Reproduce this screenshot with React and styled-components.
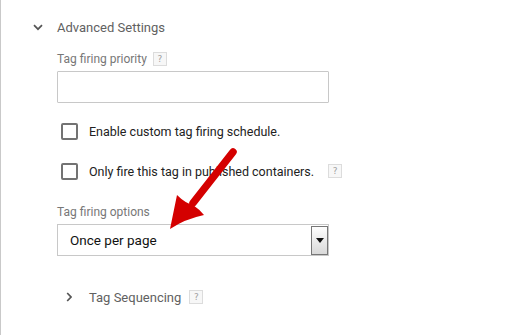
import React from 'react';
import styled, { createGlobalStyle } from 'styled-components';

const GlobalStyle = createGlobalStyle`
  html, body {
    margin: 0;
    padding: 0;
    background: #fff;
  }
  body {
    font-family: Roboto, 'Liberation Sans', Arial, sans-serif;
  }
`;

const Panel = styled.div`
  position: relative;
  width: 522px;
  height: 335px;
  border-left: 1px solid #c9c9c9;
  box-sizing: border-box;
  overflow: hidden;
`;

const SectionHeader = styled.div`
  display: flex;
  align-items: center;
  height: 20px;
  margin-top: ${(p) => p.top || 0}px;
  padding-left: ${(p) => p.indent}px;
  color: #616161;
  font-size: 13px;
`;

const Chevron = styled.svg`
  flex: none;
  width: ${(p) => p.w}px;
  margin-right: ${(p) => p.gap}px;
`;

const Body = styled.div`
  padding-left: 56px;
  width: 272px;
`;

const FieldLabel = styled.div`
  display: flex;
  align-items: center;
  gap: 6px;
  height: 14px;
  margin-top: ${(p) => p.top}px;
  color: #777;
  font-size: 12px;
`;

const Help = styled.span`
  display: inline-flex;
  align-items: center;
  justify-content: center;
  flex: none;
  width: 12px;
  height: 12px;
  border: 1px solid #dcdcdc;
  background: #f7f7f7;
  color: #a0a0a0;
  font-size: 9px;
  font-family: 'DejaVu Sans', sans-serif;
  margin-left: ${(p) => p.left || 0}px;
`;

const TextInput = styled.div`
  height: 30px;
  margin-top: 5px;
  border: 1px solid #c8c8c8;
  border-radius: 1px;
`;

const CheckRow = styled.label`
  display: flex;
  align-items: center;
  height: 18px;
  margin-top: ${(p) => p.top}px;
  padding-left: 4px;
  color: #222;
  font-size: 12.5px;
  white-space: nowrap;
`;

const Box = styled.span`
  flex: none;
  width: 13px;
  height: 13px;
  border: 2px solid #737373;
  border-radius: 2px;
  margin-right: 11px;
`;

const Select = styled.div`
  display: flex;
  align-items: center;
  justify-content: space-between;
  height: 30px;
  margin-top: 5px;
  border: 1px solid #c8c8c8;
  padding-left: 12px;
  color: #111;
  font-size: 13.5px;
`;

const DropButton = styled.span`
  display: flex;
  align-items: center;
  justify-content: center;
  width: 15px;
  height: 27px;
  border: 1px solid #777;
  background: linear-gradient(#fefefe, #d9d9d9);
`;

const Arrow = styled.svg`
  position: absolute;
  left: 160px;
  top: 145px;
`;

export default function App() {
  return (
    <>
      <GlobalStyle />
      <Panel>
        <SectionHeader top={17} indent={32}>
          <Chevron w={10} gap={14} viewBox="0 0 10 7">
            <path d="M1 1.2 L5 5.2 L9 1.2" fill="none" stroke="#555" strokeWidth="1.7" />
          </Chevron>
          Advanced Settings
        </SectionHeader>
        <Body>
          <FieldLabel top={15}>
            Tag firing priority <Help>?</Help>
          </FieldLabel>
          <TextInput />
          <CheckRow top={19}>
            <Box />
            Enable custom tag firing schedule.
          </CheckRow>
          <CheckRow top={22}>
            <Box />
            Only fire this tag in published containers.
            <Help left={14}>?</Help>
          </CheckRow>
          <FieldLabel top={25}>Tag firing options</FieldLabel>
          <Select>
            Once per page
            <DropButton>
              <svg width="8" height="5" viewBox="0 0 8 5">
                <path d="M0 0 H8 L4 5 Z" fill="#111" />
              </svg>
            </DropButton>
          </Select>
        </Body>
        <SectionHeader top={31} indent={65}>
          <Chevron w={6} gap={17} viewBox="0 0 6 10">
            <path d="M1.2 1 L5 5 L1.2 9" fill="none" stroke="#555" strokeWidth="1.7" />
          </Chevron>
          Tag Sequencing
          <Help left={8}>?</Help>
        </SectionHeader>
        <Arrow width="80" height="92" viewBox="0 0 80 92">
          <path d="M72 7 L32 58" stroke="#d40000" strokeWidth="7.5" strokeLinecap="round" />
          <path d="M9 84 L16 50 Q24 58 32 60 Q38 64 43 70 Q24 74 9 84 Z" fill="#d40000" />
        </Arrow>
      </Panel>
    </>
  );
}
